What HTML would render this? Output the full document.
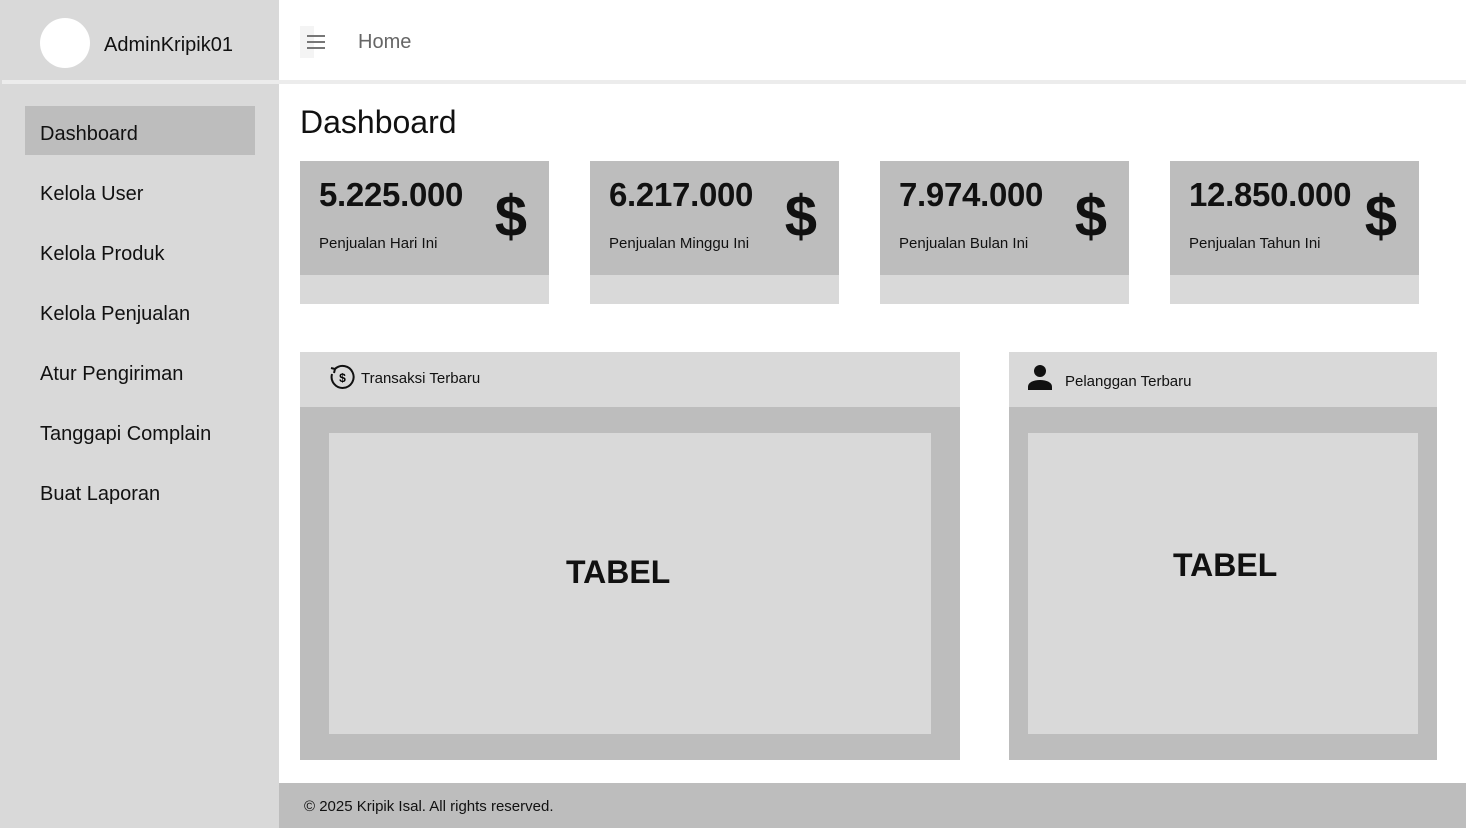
<!DOCTYPE html><html><head><style>
*{margin:0;padding:0;box-sizing:border-box}
body{width:1466px;height:828px;position:relative;background:#fff;font-family:"Liberation Sans",sans-serif;overflow:hidden;color:#111}
.a{position:absolute}
.side{left:0;top:0;width:279px;height:828px;background:#d9d9d9}
.nav{left:40px;font-size:20px;color:#111}
.card{width:249px;height:143px;background:#d9d9d9}
.card .t{position:absolute;left:0;top:0;width:249px;height:114px;background:#bdbdbd}
.card b{position:absolute;left:19px;top:15px;font-size:33px;letter-spacing:-0.3px}
.card span{position:absolute;left:19px;top:74px;font-size:15px}
.card i{position:absolute;right:22px;top:22px;font-size:58px;font-weight:bold;font-style:normal}
.tb{font-size:32px;font-weight:bold}
</style></head><body>
<div class="a side"></div>
<div class="a" style="left:2px;top:80px;width:1464px;height:4px;background:#ececec"></div>
<div class="a" style="left:40px;top:18px;width:50px;height:50px;border-radius:50%;background:#fff"></div>
<div class="a" style="left:104px;top:34px;font-size:20px">AdminKripik01</div>
<div class="a" style="left:300px;top:26px;width:14px;height:32px;background:#f4f4f4"></div>
<div class="a" style="left:307px;top:35px;width:18px;height:2px;background:#777;box-shadow:0 6px 0 #777,0 12px 0 #777"></div>
<div class="a" style="left:358px;top:31px;font-size:20px;color:#666">Home</div>
<div class="a" style="left:25px;top:106px;width:230px;height:49px;background:#bdbdbd"></div>
<div class="a nav" style="top:123px">Dashboard</div>
<div class="a nav" style="top:183px">Kelola User</div>
<div class="a nav" style="top:243px">Kelola Produk</div>
<div class="a nav" style="top:303px">Kelola Penjualan</div>
<div class="a nav" style="top:363px">Atur Pengiriman</div>
<div class="a nav" style="top:423px">Tanggapi Complain</div>
<div class="a nav" style="top:483px">Buat Laporan</div>
<div class="a" style="left:300px;top:104px;font-size:32px">Dashboard</div>
<div class="a card" style="left:300px;top:161px"><div class="t"></div><b>5.225.000</b><span>Penjualan Hari Ini</span><i>$</i></div>
<div class="a card" style="left:590px;top:161px"><div class="t"></div><b>6.217.000</b><span>Penjualan Minggu Ini</span><i>$</i></div>
<div class="a card" style="left:880px;top:161px"><div class="t"></div><b>7.974.000</b><span>Penjualan Bulan Ini</span><i>$</i></div>
<div class="a card" style="left:1170px;top:161px"><div class="t"></div><b>12.850.000</b><span>Penjualan Tahun Ini</span><i>$</i></div>
<div class="a" style="left:300px;top:352px;width:660px;height:408px;background:#bdbdbd"></div>
<div class="a" style="left:300px;top:352px;width:660px;height:55px;background:#d9d9d9"></div>
<svg class="a" style="left:329px;top:364px" width="27" height="27" viewBox="0 0 27 27"><path d="M6 5A11 11 0 1 1 3 10" fill="none" stroke="#111" stroke-width="2"/><path d="M2 4l4 1-1 4" fill="none" stroke="#111" stroke-width="2"/><text x="13.5" y="18" font-size="12" font-weight="bold" text-anchor="middle" font-family="Liberation Sans">$</text></svg>
<div class="a" style="left:361px;top:370px;font-size:15px">Transaksi Terbaru</div>
<div class="a" style="left:329px;top:433px;width:602px;height:301px;background:#d9d9d9"></div>
<div class="a tb" style="left:566px;top:554px">TABEL</div>
<div class="a" style="left:1009px;top:352px;width:428px;height:408px;background:#bdbdbd"></div>
<div class="a" style="left:1009px;top:352px;width:428px;height:55px;background:#d9d9d9"></div>
<svg class="a" style="left:1027px;top:364px" width="26" height="26" viewBox="0 0 26 26"><circle cx="13" cy="7" r="6" fill="#111"/><path d="M1 26v-3c0-5 6-7 12-7s12 2 12 7v3z" fill="#111"/></svg>
<div class="a" style="left:1065px;top:373px;font-size:15px">Pelanggan Terbaru</div>
<div class="a" style="left:1028px;top:433px;width:390px;height:301px;background:#d9d9d9"></div>
<div class="a tb" style="left:1173px;top:547px">TABEL</div>
<div class="a" style="left:279px;top:783px;width:1187px;height:45px;background:#bdbdbd"></div>
<div class="a" style="left:304px;top:798px;font-size:15px">© 2025 Kripik Isal. All rights reserved.</div>
</body></html>
